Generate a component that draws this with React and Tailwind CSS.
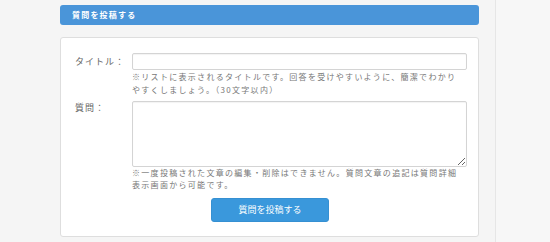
import React from 'react';

const jp = { fontFamily: '"Noto Sans CJK JP", "Noto Sans", sans-serif' };

export default function App() {
  return (
    <div className="flex w-full h-[242px] overflow-hidden bg-[#f5f5f5]" style={jp}>
      <main className="w-[495px] shrink-0 pl-[60px] pr-[16px] pt-[5px]">
        <div className="h-[20px] flex items-center pl-[12px] rounded-[3px] bg-[#4a95d9] text-white text-[8px] font-bold tracking-[1.2px]">
          質問を投稿する
        </div>

        <div className="mt-[12px] h-[200px] bg-white border border-[#dedede] rounded-[3px] pt-[15px] pl-[14px] pr-[11px]">
          <div className="flex">
            <label className="w-[57px] shrink-0 text-[9px] leading-[17px] tracking-[1px] text-[#666]">タイトル：</label>
            <div className="flex-1">
              <input type="text" className="block w-full h-[17px] border border-[#d4d4d4] rounded-[2px] shadow-[inset_0_1px_1px_rgba(0,0,0,0.05)] outline-none" />
              <p className="text-[8px] leading-[13px] tracking-[1.3px] text-[#777] whitespace-nowrap">
                ※リストに表示されるタイトルです。回答を受けやすいように、簡潔でわかり
                <br />
                やすくしましょう。（30文字以内）
              </p>
            </div>
          </div>

          <div className="flex mt-[5px]">
            <label className="w-[57px] shrink-0 text-[9px] leading-[12px] pt-[1px] tracking-[1px] text-[#666]">質問：</label>
            <div className="flex-1">
              <textarea className="block w-full h-[66px] border border-[#d4d4d4] rounded-[2px] shadow-[inset_0_1px_1px_rgba(0,0,0,0.05)] outline-none resize-y" />
              <p className="text-[8px] leading-[12px] tracking-[1.3px] text-[#777] whitespace-nowrap">
                ※一度投稿された文章の編集・削除はできません。質問文章の追記は質問詳細
                <br />
                表示画面から可能です。
              </p>
            </div>
          </div>

          <div className="flex justify-center mt-[7px] pr-[2px]">
            <button className="w-[118px] h-[24px] rounded-[3px] bg-[#3a98dc] border border-[#3590d2] text-white text-[9px]">
              質問を投稿する
            </button>
          </div>
        </div>
      </main>
      <aside className="flex-1 border-l border-[#e6e6e6] bg-[#f7f7f7]" />
    </div>
  );
}
